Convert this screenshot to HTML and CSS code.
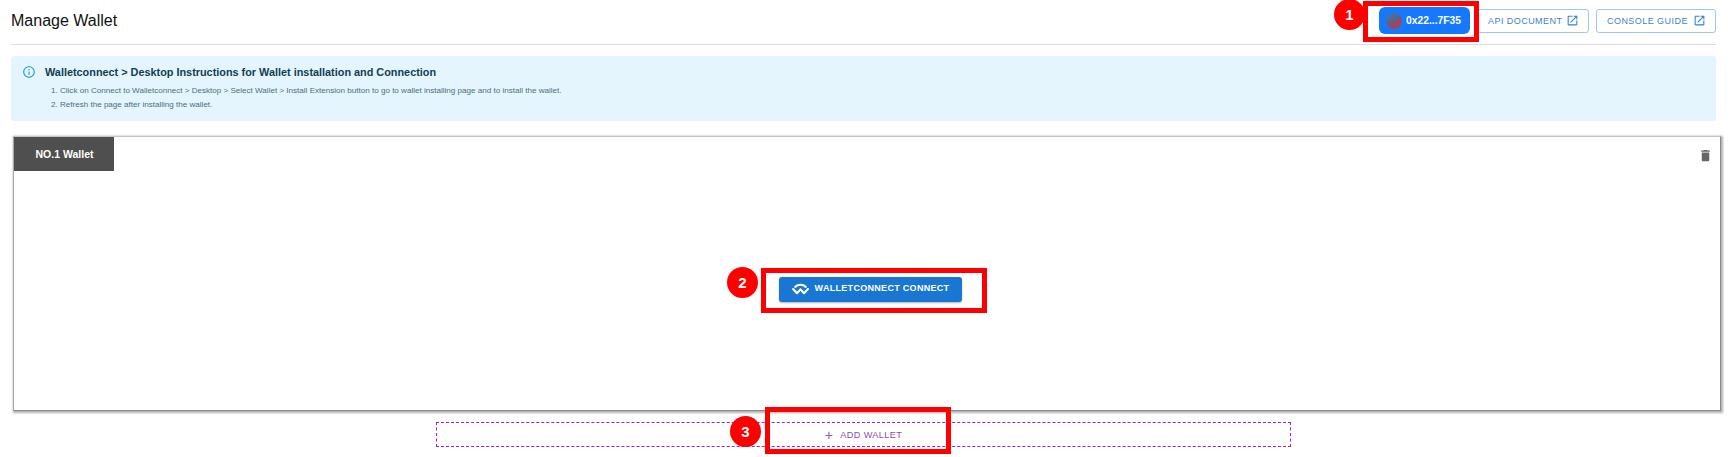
FILE: index.html
```html
<!DOCTYPE html>
<html lang="en">
<head>
<meta charset="utf-8">
<title>Manage Wallet</title>
<link rel="stylesheet" href="styles.css">
</head>
<body>
<div class="page">
  <header class="header">
    <h1 class="title">Manage Wallet</h1>
    <div class="actions">
      <button class="wallet-btn"><span class="avatar"></span>0x22...7F35</button>
      <a class="link-btn link-api">API DOCUMENT
        <svg class="ext" viewBox="0 0 24 24"><path d="M19 19H5V5h7V3H5c-1.11 0-2 .9-2 2v14c0 1.1.89 2 2 2h14c1.1 0 2-.9 2-2v-7h-2v7zM14 3v2h3.59l-9.83 9.83 1.41 1.41L19 6.41V10h2V3h-7z"/></svg>
      </a>
      <a class="link-btn link-console">CONSOLE GUIDE
        <svg class="ext" viewBox="0 0 24 24"><path d="M19 19H5V5h7V3H5c-1.11 0-2 .9-2 2v14c0 1.1.89 2 2 2h14c1.1 0 2-.9 2-2v-7h-2v7zM14 3v2h3.59l-9.83 9.83 1.41 1.41L19 6.41V10h2V3h-7z"/></svg>
      </a>
    </div>
  </header>

  <section class="alert">
    <svg class="info" viewBox="0 0 24 24"><path d="M11 7h2v2h-2zm0 4h2v6h-2zm1-9C6.48 2 2 6.48 2 12s4.48 10 10 10 10-4.48 10-10S17.52 2 12 2zm0 18c-4.41 0-8-3.59-8-8s3.59-8 8-8 8 3.59 8 8-3.59 8-8 8z"/></svg>
    <div class="alert-body">
      <div class="alert-title">Walletconnect &gt; Desktop Instructions for Wallet installation and Connection</div>
      <ol class="alert-list">
        <li>Click on Connect to Walletconnect &gt; Desktop &gt; Select Wallet &gt; Install Extension button to go to wallet installing page and to install the wallet.</li>
        <li>Refresh the page after installing the wallet.</li>
      </ol>
    </div>
  </section>

  <section class="card">
    <div class="card-top">
      <div class="tab">NO.1 Wallet</div>
      <svg class="trash" viewBox="0 0 24 24"><path d="M6 19c0 1.1.9 2 2 2h8c1.1 0 2-.9 2-2V7H6v12zM19 4h-3.5l-1-1h-5l-1 1H5v2h14V4z"/></svg>
    </div>
    <div class="card-body">
      <button class="connect-btn">
        <svg class="wc" viewBox="0 0 24 17"><path d="M4.5 5.5C8.8 1.5 15.2 1.5 19.5 5.5M1.5 8.5l5.5 6 5-5.5 5 5.5 5.5-6" fill="none" stroke="currentColor" stroke-width="3" stroke-linejoin="round" stroke-linecap="round"/></svg>
        WALLETCONNECT CONNECT
      </button>
    </div>
  </section>

  <button class="add-wallet"><span class="plus">+</span>ADD WALLET</button>
</div>

<div class="mark mark-1"></div>
<div class="badge badge-1">1</div>
<div class="mark mark-2"></div>
<div class="badge badge-2">2</div>
<div class="mark mark-3"></div>
<div class="badge badge-3">3</div>
</body>
</html>
```
FILE: styles.css
```css
* { box-sizing: border-box; }
html, body { margin: 0; padding: 0; background: #fff; }
body { width: 1735px; height: 457px; overflow: hidden; position: relative; font-family: "Liberation Sans", Arial, sans-serif; }
.page { padding: 0 19px 0 11px; display: flex; flex-direction: column; }

.header { height: 45px; padding-top: 7px; border-bottom: 1px solid #dcdcdc; display: flex; justify-content: space-between; align-items: flex-start; }
.title { margin: 5px 0 0; font-size: 16px; line-height: 18px; font-weight: 400; color: #111; }
.actions { display: flex; align-items: center; gap: 7px; }
.wallet-btn { width: 91px; height: 27px; border: 0; border-radius: 6px; background: #1677ff; color: #fff; font: 700 10.3px "Liberation Sans", Arial, sans-serif; display: flex; align-items: center; gap: 4px; padding: 0 0 0 7px; }
.avatar { width: 16px; height: 16px; border-radius: 50%; background: linear-gradient(150deg, #2f7fb0 10%, #6a5a80 50%, #d0323c 90%); }
.link-btn { height: 24px; padding: 0 9px 0 10px; border: 1px solid #a3c6ec; border-radius: 3px; color: #3f7fcb; font-size: 9px; letter-spacing: .45px; display: flex; align-items: center; justify-content: space-between; }
.link-api { width: 112px; }
.link-console { width: 120px; }
.ext { width: 13px; height: 13px; fill: #2f83d6; }

.alert { margin-top: 11px; height: 65px; background: #e5f5fd; border-radius: 3px; padding: 9px 11px; display: flex; gap: 9px; }
.info { width: 14px; height: 14px; fill: #2a9ad6; flex: none; }
.alert-title { font-size: 10.87px; line-height: 14px; font-weight: 700; color: #0f3f56; }
.alert-list { margin: 5px 0 0; padding: 0 0 0 6px; font-size: 8.07px; line-height: 14px; color: #4a6f80; list-style-position: inside; }

.card { margin: 15px -5px 0 2px; height: 275px; border: 1px solid #8a8a8a; border-top-color: #c4c4c4; border-left-color: #a8a8a8; box-shadow: 1px 1px 2px 1px #b0b0b0; display: flex; flex-direction: column; }
.card-top { display: flex; justify-content: space-between; align-items: flex-start; }
.tab { width: 100px; height: 34px; padding-left: 1px; background: #4f4f4f; color: #fff; font-size: 10.5px; font-weight: 700; display: flex; align-items: center; justify-content: center; }
.trash { width: 15px; height: 15px; fill: #666; margin: 11px 7px 0 0; }
.card-body { flex: 1; display: flex; align-items: center; justify-content: center; padding: 0 0 3px 7px; }
.connect-btn { width: 183px; height: 25px; border: 0; border-radius: 3px; background: #1976d2; color: #fff; box-shadow: 0 1px 2px rgba(0,0,0,.3); font: 700 9px "Liberation Sans", Arial, sans-serif; letter-spacing: .3px; display: flex; align-items: center; justify-content: center; gap: 6px; padding: 0 0 3px; }
.wc { width: 17px; height: 12px; margin-top: 2px; }

.add-wallet { margin: 11px auto 0; width: 855px; height: 25px; background: #fff; border: 1px dashed #a020c0; color: #8a4fb0; font: 400 9.2px "Liberation Sans", Arial, sans-serif; letter-spacing: .35px; display: flex; align-items: center; justify-content: center; gap: 7px; padding: 0; }
.plus { font-size: 14px; line-height: 14px; color: #a050c0; }

.mark { position: absolute; border: 5px solid #f00; }
.mark-1 { left: 1363px; top: 1px; width: 116px; height: 41px; }
.mark-2 { left: 761px; top: 268px; width: 226px; height: 45px; }
.mark-3 { left: 765px; top: 407px; width: 186px; height: 47px; }
.badge { position: absolute; width: 31px; height: 31px; border-radius: 50%; background: #f00; color: #fff; font-size: 15px; font-weight: 700; display: flex; align-items: center; justify-content: center; }
.badge-1 { left: 1334px; top: -1px; }
.badge-2 { left: 727px; top: 267px; }
.badge-3 { left: 730px; top: 416px; }
```
